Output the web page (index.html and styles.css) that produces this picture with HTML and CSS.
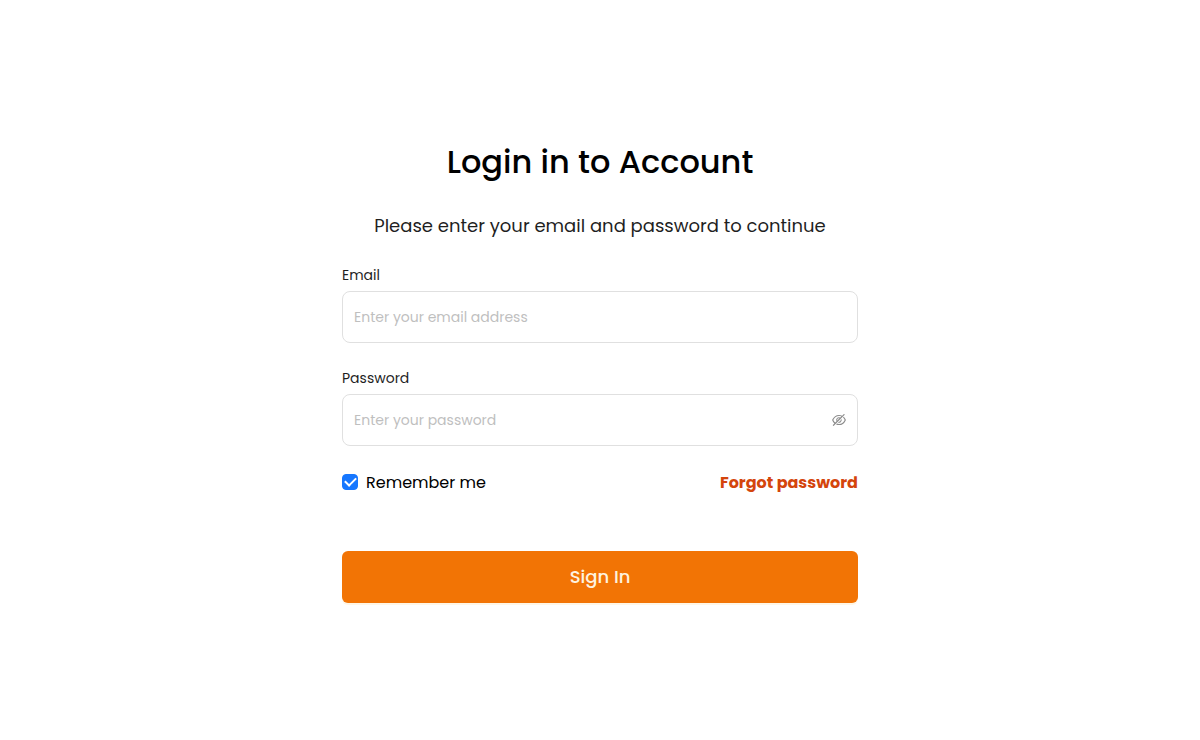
FILE: index.html
```html
<!DOCTYPE html>
<html lang="en">
<head>
    <meta charset="UTF-8">
    <meta name="viewport" content="width=device-width, initial-scale=1.0">
    <title>Login</title>
    <link rel="stylesheet" href="styles.css">
</head>
<body>

<main class="container">
    <h1>Login in to Account</h1>
    <p class="subtitle">Please enter your email and password to continue</p>

    <form class="login-form">
        <div class="input-group">
            <label for="email">Email</label>
            <div class="input-box">
                <input type="email" id="email" placeholder="Enter your email address">
            </div>
        </div>
        <div class="input-group">
            <label for="password">Password</label>
            <div class="input-box">
                <input type="password" id="password" placeholder="Enter your password">
                <button type="button" class="toggle" aria-label="Show password">
                    <svg viewBox="64 64 896 896" width="14" height="14" fill="currentColor" aria-hidden="true">
                        <path d="M942.2 486.2Q889.47 375.11 816.7 305l-50.88 50.88C807.31 395.53 843.45 447.4 874.7 512 791.5 684.2 673.4 766 512 766q-72.67 0-133.87-22.38L323 798.75Q408 838 512 838q288.3 0 430.2-300.3a60.29 60.29 0 000-51.5zm-63.57-320.64L836 122.88a8 8 0 00-11.32 0L715.31 232.2Q624.86 186 512 186q-288.3 0-430.2 300.3a60.3 60.3 0 000 51.5q56.69 119.4 136.5 191.41L112.48 835a8 8 0 000 11.31L155.17 889a8 8 0 0011.31 0l712.15-712.12a8 8 0 000-11.32zM149.3 512C232.6 339.8 350.7 258 512 258c54.54 0 104.13 9.36 149.12 28.39l-70.3 70.3a176 176 0 00-238.13 238.13l-83.42 83.42C223.1 637.49 183.3 582.28 149.3 512zm246.7 0a112.11 112.11 0 01146.2-106.69L401.31 546.2A112 112 0 01396 512z"/>
                        <path d="M508 624c-3.46 0-6.87-.16-10.25-.47l-52.82 52.82a176.09 176.09 0 00227.42-227.42l-52.82 52.82c.31 3.38.47 6.79.47 10.25a111.94 111.94 0 01-112 112z"/>
                    </svg>
                </button>
            </div>
        </div>
        <div class="options">
            <label class="remember">
                <input type="checkbox" checked>
                Remember me
            </label>
            <a href="#" class="forgot">Forgot password</a>
        </div>
        <button type="submit" class="submit">Sign In</button>
    </form>
</main>

</body>
</html>
```
FILE: styles.css
```css
* {
    box-sizing: border-box;
}
body {
    display: flex;
    align-items: center;
    justify-content: center;
    min-height: 100vh;
    margin: 0;
    background-color: #fff;
    color: #000;
    font-family: Poppins, Inter, sans-serif;
}
.container {
    width: 100%;
    max-width: 516px;
}
h1 {
    margin: 0 0 26px;
    font-size: 32px;
    font-weight: 500;
    line-height: 48px;
    text-align: center;
}
.subtitle {
    margin: 0 0 24px;
    color: #1f1f1f;
    font-size: 18px;
    line-height: 28px;
    text-align: center;
}
.input-group {
    margin-bottom: 24px;
}
.input-group label {
    display: block;
    margin-bottom: 5px;
    color: #1f1f1f;
    font-size: 14px;
    line-height: 22px;
}
.input-box {
    display: flex;
    align-items: center;
    height: 52px;
    padding: 0 11px;
    border: 1px solid #e0e0e0;
    border-radius: 8px;
}
.input-box:focus-within {
    border-color: #f27405;
}
.input-box input {
    flex: 1;
    min-width: 0;
    padding: 0;
    border: none;
    outline: none;
    background: none;
    font-family: inherit;
    font-size: 14px;
    line-height: 22px;
}
.input-box input::placeholder {
    color: #bfbfbf;
}
.toggle {
    display: flex;
    padding: 0;
    border: none;
    background: none;
    color: #8c8c8c;
    cursor: pointer;
}
.options {
    display: flex;
    align-items: center;
    justify-content: space-between;
    margin-bottom: 56px;
    font-size: 16px;
    line-height: 25px;
}
.remember {
    display: flex;
    align-items: center;
    gap: 8px;
}
.remember input {
    display: grid;
    place-items: center;
    width: 16px;
    height: 16px;
    margin: 0;
    border: 1px solid #d9d9d9;
    border-radius: 4px;
    appearance: none;
}
.remember input:checked {
    border-color: #1677ff;
    background-color: #1677ff;
}
.remember input:checked::before {
    content: "";
    width: 5px;
    height: 9px;
    margin-bottom: 3px;
    border: solid #fff;
    border-width: 0 2px 2px 0;
    transform: rotate(45deg);
}
.forgot {
    color: #d4450c;
    font-weight: 700;
    text-decoration: none;
}
.submit {
    display: block;
    width: 100%;
    height: 52px;
    border: none;
    border-radius: 6px;
    background-color: #f27405;
    box-shadow: 0 2px 0 #fff6e6;
    color: #fef3e0;
    font-family: inherit;
    font-size: 18px;
    font-weight: 500;
    cursor: pointer;
}
.submit:hover {
    background-color: #d96704;
}
```
